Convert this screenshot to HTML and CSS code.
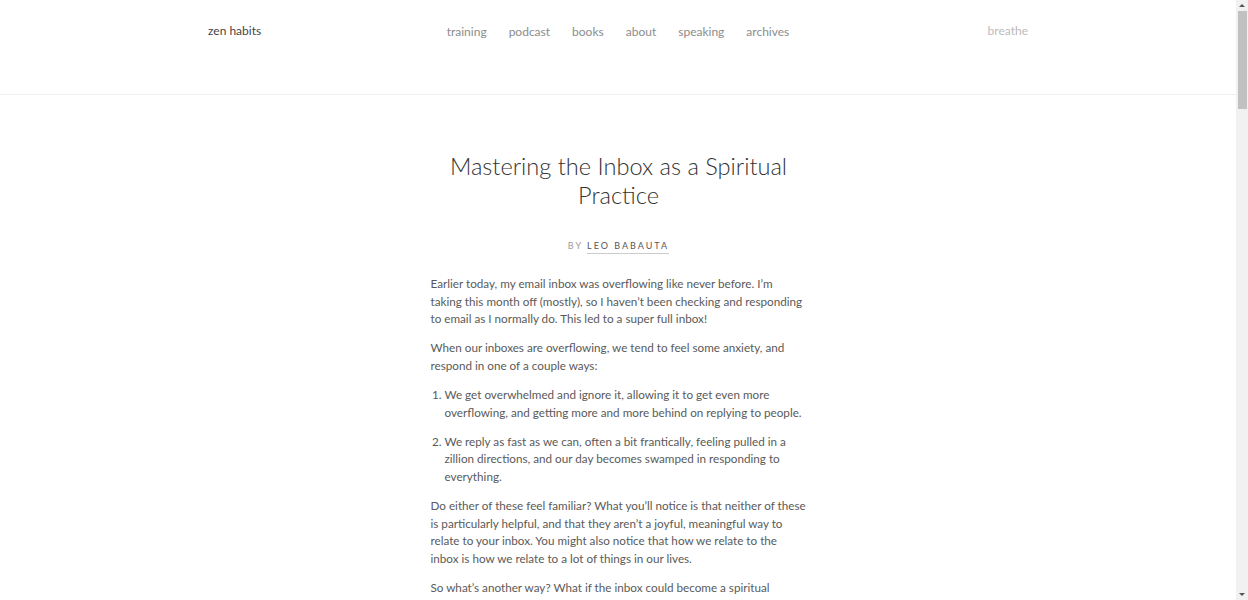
FILE: index.html
```html
<!DOCTYPE html>
<html lang="en">
<head>
<meta charset="utf-8">
<title>Mastering the Inbox as a Spiritual Practice</title>
<link rel="stylesheet" href="styles.css">
</head>
<body>
<div class="page">
  <header class="site-header">
    <div class="header-inner">
      <a class="logo" href="#">zen habits</a>
      <nav class="main-nav">
        <a href="#">training</a>
        <a href="#">podcast</a>
        <a href="#">books</a>
        <a href="#">about</a>
        <a href="#">speaking</a>
        <a href="#">archives</a>
      </nav>
      <a class="breathe" href="#">breathe</a>
    </div>
  </header>
  <main class="post">
    <h1 class="post-title">Mastering the Inbox as a Spiritual Practice</h1>
    <p class="byline"><span class="by">BY</span> <a href="#" class="author">LEO BABAUTA</a></p>
    <div class="post-body">
      <p>Earlier today, my email inbox was overflowing like never before. I’m taking this month off (mostly), so I haven’t been checking and responding to email as I normally do. This led to a super full inbox!</p>
      <p>When our inboxes are overflowing, we tend to feel some anxiety, and respond in one of a couple ways:</p>
      <ol>
        <li>We get overwhelmed and ignore it, allowing it to get even more overflowing, and getting more and more behind on replying to people.</li>
        <li>We reply as fast as we can, often a bit frantically, feeling pulled in a zillion directions, and our day becomes swamped in responding to everything.</li>
      </ol>
      <p>Do either of these feel familiar? What you’ll notice is that neither of these is particularly helpful, and that they aren’t a joyful, meaningful way to relate to your inbox. You might also notice that how we relate to the inbox is how we relate to a lot of things in our lives.</p>
      <p>So what’s another way? What if the inbox could become a spiritual practice? What if it could be a place of presence and love?</p>
      <p>Let’s talk about how.</p>
    </div>
  </main>
</div>
<div class="scrollbar" aria-hidden="true">
  <span class="sb-arrow sb-up"></span>
  <span class="sb-thumb"></span>
  <span class="sb-arrow sb-down"></span>
</div>
</body>
</html>
```
FILE: styles.css
```css
body {
  margin: 0;
  font-family: Lato, "Open Sans", sans-serif;
  color: #5a5a5a;
  background: #fff;
}
a {
  text-decoration: none;
  color: inherit;
}
.page {
  margin-right: 12px;
}
.scrollbar {
  position: fixed;
  top: 0;
  right: 0;
  bottom: 0;
  width: 12px;
  background: #f1f1f1;
  display: flex;
  flex-direction: column;
  align-items: center;
}
.sb-arrow {
  width: 0;
  height: 0;
  border-left: 3px solid transparent;
  border-right: 3px solid transparent;
  margin: 4px 0 0;
}
.sb-up {
  border-bottom: 3px solid #555;
}
.sb-thumb {
  width: 9px;
  height: 98px;
  margin-top: 4px;
  background: #c1c1c1;
  flex: none;
}
.sb-down {
  border-top: 3px solid #555;
  margin-top: auto;
  margin-bottom: 4px;
}
.site-header {
  border-bottom: 1px solid #efefef;
  height: 94px;
}
.header-inner {
  width: 820px;
  margin: 0 auto;
  display: grid;
  grid-template-columns: 1fr auto 1fr;
  align-items: center;
  padding-top: 22px;
}
.logo {
  font-size: 12px;
  color: #444;
  justify-self: start;
}
.main-nav {
  display: flex;
  gap: 22px;
  font-size: 12px;
  color: #8c8c8c;
  padding-top: 2px;
}
.breathe {
  justify-self: end;
  font-size: 12px;
  color: #bbb;
}
.post {
  width: 376px;
  margin: 0 auto;
  padding-left: 1px;
}
.post-title {
  font-weight: 300;
  font-size: 23.6px;
  line-height: 29px;
  color: #333;
  text-align: center;
  margin: 57px 0 0;
}
.byline {
  text-align: center;
  font-size: 9px;
  letter-spacing: 2px;
  margin: 30px 0 0;
  color: #999;
}
.author {
  color: #555;
  border-bottom: 1px solid #ccc;
  padding-bottom: 2px;
}
.post-body {
  font-size: 11.7px;
  line-height: 17.6px;
  margin-top: 24px;
}
.post-body p {
  margin: 0 0 11.5px;
}
.post-body ol {
  margin: 0 0 11.5px;
  padding-left: 14px;
}
.post-body li {
  margin-bottom: 11.5px;
}
```
